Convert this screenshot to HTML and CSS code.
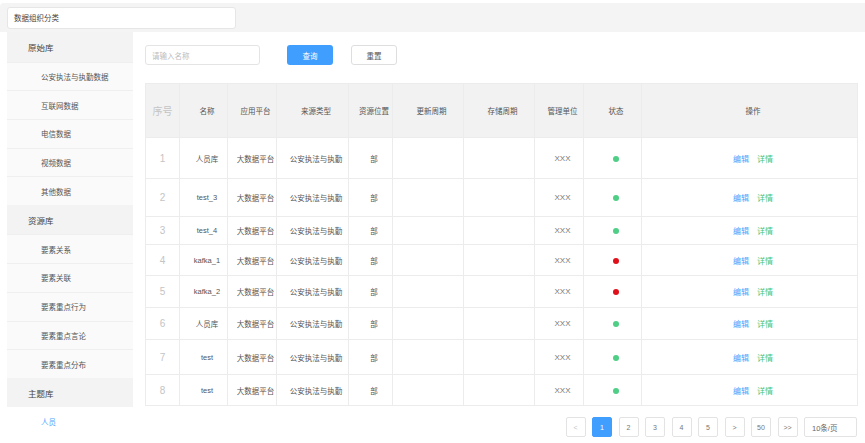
FILE: index.html
```html
<!DOCTYPE html>
<html lang="zh-CN">
<head>
<meta charset="utf-8">
<title>数据组织分类</title>
<link rel="stylesheet" href="styles.css">
</head>
<body>
<div class="topbar">
  <div class="cat-input">数据组织分类</div>
</div>
<div class="layout">
  <aside class="sidebar">
    <div class="group">原始库</div>
    <div class="item">公安执法与执勤数据</div>
    <div class="item">互联网数据</div>
    <div class="item">电信数据</div>
    <div class="item">视频数据</div>
    <div class="item">其他数据</div>
    <div class="group">资源库</div>
    <div class="item">要素关系</div>
    <div class="item">要素关联</div>
    <div class="item">要素重点行为</div>
    <div class="item">要素重点言论</div>
    <div class="item">要素重点分布</div>
    <div class="group">主题库</div>
    <div class="item active">人员</div>
  </aside>
  <main class="content">
    <div class="toolbar">
      <div class="search">请输入名称</div>
      <div class="btn btn-primary">查询</div>
      <div class="btn btn-default">重置</div>
    </div>
    <table class="grid">
      <colgroup>
        <col class="c1"><col class="c2"><col class="c3"><col class="c4"><col class="c5">
        <col class="c6"><col class="c7"><col class="c8"><col class="c9"><col class="c10">
      </colgroup>
      <thead>
        <tr>
          <th class="idx">序号</th><th>名称</th><th>应用平台</th><th>来源类型</th><th>资源位置</th>
          <th>更新周期</th><th>存储周期</th><th>管理单位</th><th>状态</th><th>操作</th>
        </tr>
      </thead>
      <tbody>
        <tr><td class="idx">1</td><td>人员库</td><td>大数据平台</td><td>公安执法与执勤</td><td>部</td><td></td><td></td><td class="unit">XXX</td><td><span class="dot ok"></span></td><td><span class="edit">编辑</span><span class="detail">详情</span></td></tr>
        <tr><td class="idx">2</td><td>test_3</td><td>大数据平台</td><td>公安执法与执勤</td><td>部</td><td></td><td></td><td class="unit">XXX</td><td><span class="dot ok"></span></td><td><span class="edit">编辑</span><span class="detail">详情</span></td></tr>
        <tr><td class="idx">3</td><td>test_4</td><td>大数据平台</td><td>公安执法与执勤</td><td>部</td><td></td><td></td><td class="unit">XXX</td><td><span class="dot ok"></span></td><td><span class="edit">编辑</span><span class="detail">详情</span></td></tr>
        <tr><td class="idx">4</td><td>kafka_1</td><td>大数据平台</td><td>公安执法与执勤</td><td>部</td><td></td><td></td><td class="unit">XXX</td><td><span class="dot bad"></span></td><td><span class="edit">编辑</span><span class="detail">详情</span></td></tr>
        <tr><td class="idx">5</td><td>kafka_2</td><td>大数据平台</td><td>公安执法与执勤</td><td>部</td><td></td><td></td><td class="unit">XXX</td><td><span class="dot bad"></span></td><td><span class="edit">编辑</span><span class="detail">详情</span></td></tr>
        <tr><td class="idx">6</td><td>人员库</td><td>大数据平台</td><td>公安执法与执勤</td><td>部</td><td></td><td></td><td class="unit">XXX</td><td><span class="dot ok"></span></td><td><span class="edit">编辑</span><span class="detail">详情</span></td></tr>
        <tr><td class="idx">7</td><td>test</td><td>大数据平台</td><td>公安执法与执勤</td><td>部</td><td></td><td></td><td class="unit">XXX</td><td><span class="dot ok"></span></td><td><span class="edit">编辑</span><span class="detail">详情</span></td></tr>
        <tr><td class="idx">8</td><td>test</td><td>大数据平台</td><td>公安执法与执勤</td><td>部</td><td></td><td></td><td class="unit">XXX</td><td><span class="dot ok"></span></td><td><span class="edit">编辑</span><span class="detail">详情</span></td></tr>
      </tbody>
    </table>
    <div class="pager">
      <div class="pg disabled">&lt;</div>
      <div class="pg current">1</div>
      <div class="pg">2</div>
      <div class="pg">3</div>
      <div class="pg">4</div>
      <div class="pg">5</div>
      <div class="pg">&gt;</div>
      <div class="pg">50</div>
      <div class="pg">&gt;&gt;</div>
      <div class="pg size">10条/页</div>
    </div>
  </main>
</div>
</body>
</html>
```

FILE: styles.css
```css
* { box-sizing: border-box; }

body {
  margin: 0;
  background: #fff;
  font-family: "Liberation Sans", "Noto Sans CJK SC", sans-serif;
  color: #333;
}

.topbar {
  margin-top: 3px;
  height: 29px;
  background: #f4f4f4;
  border-radius: 4px 0 0 0;
  display: flex;
  align-items: center;
  padding-left: 7px;
}

.cat-input {
  width: 229px;
  height: 22px;
  background: #fff;
  border: 1px solid #e6e6e6;
  border-radius: 3px;
  font-size: 7.5px;
  color: #444;
  padding-left: 6px;
  display: flex;
  align-items: center;
}

.layout {
  display: flex;
}

.sidebar {
  width: 126px;
  margin-left: 7px;
  flex: none;
}

.group {
  height: 29.5px;
  background: #f3f3f3;
  padding-left: 21px;
  font-size: 8.5px;
  color: #444;
  display: flex;
  align-items: center;
}

.item {
  height: 28.7px;
  background: #fafafa;
  border-top: 1px solid #efefef;
  padding-left: 34px;
  font-size: 7.5px;
  color: #555;
  display: flex;
  align-items: center;
}

.item.active {
  background: #fff;
  color: #4aa3ff;
  border-top: none;
}

.content {
  flex: 1;
  padding: 13px 8px 0 12px;
}

.toolbar {
  display: flex;
  align-items: center;
  height: 20px;
}

.search {
  width: 115px;
  height: 20px;
  border: 1px solid #e4e4e4;
  border-radius: 3px;
  font-size: 7.5px;
  color: #bdbdbd;
  padding-left: 6px;
  display: flex;
  align-items: center;
}

.btn {
  width: 46px;
  height: 20px;
  border-radius: 3px;
  font-size: 7.5px;
  display: flex;
  align-items: center;
  justify-content: center;
}

.btn-primary {
  margin-left: 27px;
  background: #409eff;
  color: #fff;
}

.btn-default {
  margin-left: 18px;
  border: 1px solid #dedede;
  color: #555;
  background: #fff;
}

.grid {
  margin-top: 18px;
  width: 712px;
  border-collapse: collapse;
  table-layout: fixed;
  border: 1px solid #ececec;
}

.c1 { width: 34px; }
.c2 { width: 48px; }
.c3 { width: 49px; }
.c4 { width: 72px; }
.c5 { width: 44px; }
.c6 { width: 71px; }
.c7 { width: 71px; }
.c8 { width: 49px; }
.c9 { width: 58px; }
.c10 { width: 216px; }

.grid th,
.grid td {
  border: 1px solid #ececec;
  text-align: center;
  padding: 0 0 0 7px;
  font-size: 7.5px;
  white-space: nowrap;
  overflow: hidden;
}

.grid th {
  background: #f2f2f2;
  height: 54px;
  font-weight: normal;
  color: #555;
}

.grid th.idx,
.grid td.idx {
  padding: 0;
  font-size: 10px;
  color: #c4c4c4;
}

.grid td {
  background: #fff;
  color: #555;
}

.grid td.unit {
  color: #777;
  font-size: 8px;
}

.grid tbody tr:nth-child(1) { height: 41px; }
.grid tbody tr:nth-child(2) { height: 38px; }
.grid tbody tr:nth-child(3) { height: 28px; }
.grid tbody tr:nth-child(4) { height: 31px; }
.grid tbody tr:nth-child(5) { height: 32px; }
.grid tbody tr:nth-child(6) { height: 32px; }
.grid tbody tr:nth-child(7) { height: 35px; }
.grid tbody tr:nth-child(8) { height: 31px; }

.dot {
  display: inline-block;
  width: 6px;
  height: 6px;
  border-radius: 50%;
  vertical-align: middle;
}

.dot.ok { background: #4fcf86; }
.dot.bad { background: #e0101b; }

.edit {
  color: #4aa3ff;
  font-size: 8px;
}

.detail {
  color: #3fc47a;
  font-size: 8px;
  margin-left: 8px;
}

.pager {
  margin-top: 11px;
  width: 712px;
  display: flex;
  justify-content: flex-end;
  gap: 6.5px;
}

.pg {
  width: 20px;
  height: 20px;
  border: 1px solid #e3e3e3;
  border-radius: 2px;
  font-size: 7px;
  color: #777;
  display: flex;
  align-items: center;
  justify-content: center;
  background: #fff;
}

.pg.disabled { color: #c4c4c4; }

.pg.current {
  background: #409eff;
  border-color: #409eff;
  color: #fff;
}

.pg.size {
  width: 53px;
  justify-content: flex-start;
  padding-left: 7px;
  font-size: 7.5px;
  color: #666;
}
```
